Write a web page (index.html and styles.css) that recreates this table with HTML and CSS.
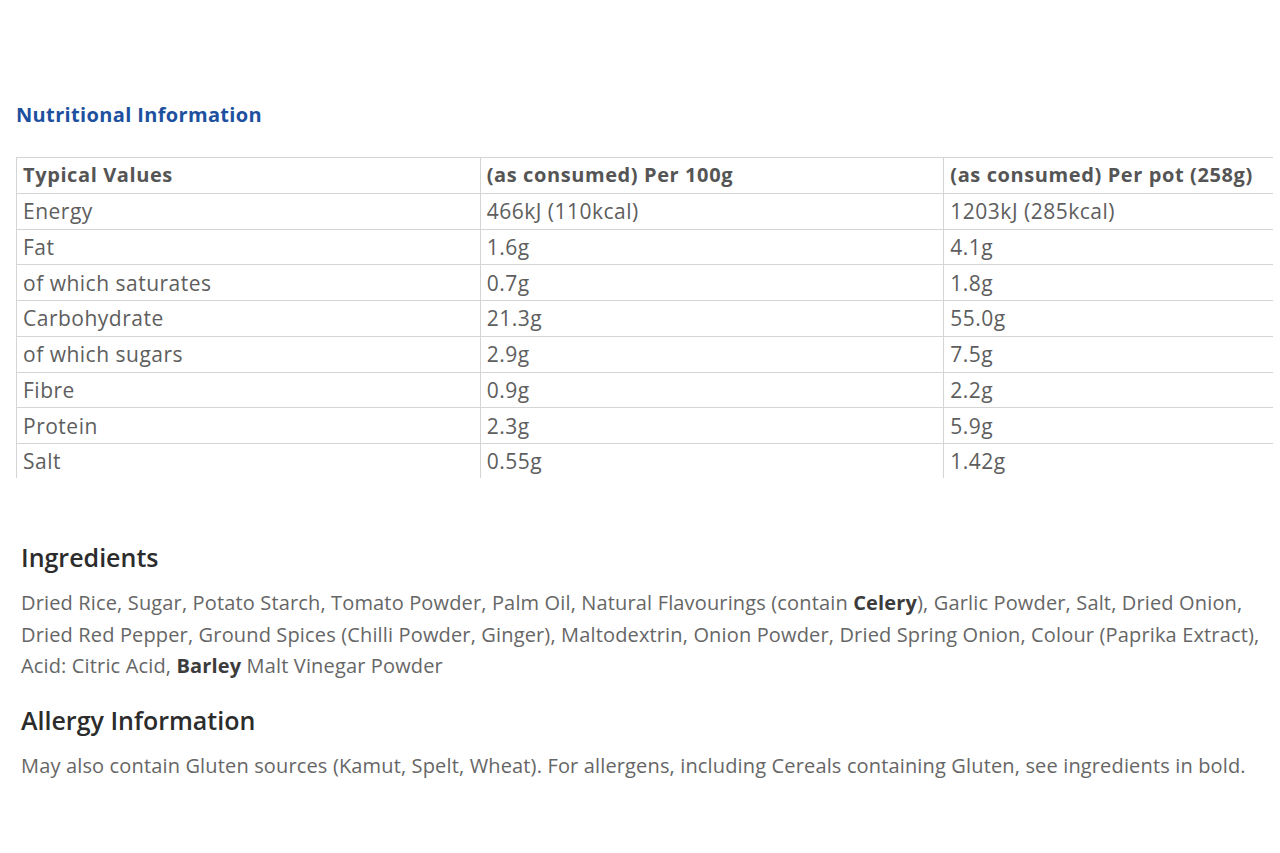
FILE: index.html
```html
<!DOCTYPE html>
<html lang="en">
<head>
<meta charset="utf-8">
<title>Nutritional Information</title>
<link rel="stylesheet" href="styles.css">
</head>
<body>
<main class="page">
  <h2 class="nutri-title">Nutritional Information</h2>
  <div class="table-wrap">
    <table class="nutri-table">
      <colgroup><col class="c1"><col class="c2"><col class="c3"></colgroup>
      <thead>
        <tr><th>Typical Values</th><th>(as consumed) Per 100g</th><th>(as consumed) Per pot (258g)</th></tr>
      </thead>
      <tbody>
        <tr><td>Energy</td><td>466kJ (110kcal)</td><td>1203kJ (285kcal)</td></tr>
        <tr><td>Fat</td><td>1.6g</td><td>4.1g</td></tr>
        <tr><td>of which saturates</td><td>0.7g</td><td>1.8g</td></tr>
        <tr><td>Carbohydrate</td><td>21.3g</td><td>55.0g</td></tr>
        <tr><td>of which sugars</td><td>2.9g</td><td>7.5g</td></tr>
        <tr><td>Fibre</td><td>0.9g</td><td>2.2g</td></tr>
        <tr><td>Protein</td><td>2.3g</td><td>5.9g</td></tr>
        <tr><td>Salt</td><td>0.55g</td><td>1.42g</td></tr>
      </tbody>
    </table>
  </div>
  <section class="info">
    <h3 class="info-title">Ingredients</h3>
    <p class="info-text">Dried Rice, Sugar, Potato Starch, Tomato Powder, Palm Oil, Natural Flavourings (contain <b>Celery</b>), Garlic Powder, Salt, Dried Onion, Dried Red Pepper, Ground Spices (Chilli Powder, Ginger), Maltodextrin, Onion Powder, Dried Spring Onion, Colour (Paprika Extract), Acid: Citric Acid, <b>Barley</b> Malt Vinegar Powder</p>
    <h3 class="info-title">Allergy Information</h3>
    <p class="info-text">May also contain Gluten sources (Kamut, Spelt, Wheat). For allergens, including Cereals containing Gluten, see ingredients in bold.</p>
  </section>
</main>
</body>
</html>
```

FILE: styles.css
```css
html, body {
  margin: 0;
  padding: 0;
  background: #ffffff;
}
body {
  font-family: "Open Sans", "Liberation Sans", sans-serif;
  color: #5a5a5a;
}
.page {
  padding: 102px 0 0 16px;
}
.nutri-title {
  margin: 0;
  font-size: 20px;
  line-height: 26px;
  font-weight: 700;
  letter-spacing: 0.35px;
  color: #1d51a0;
}
.table-wrap {
  margin-top: 29px;
  width: 1257px;
  height: 321px;
  overflow: hidden;
}
.nutri-table {
  border-collapse: collapse;
  table-layout: fixed;
  width: 1392px;
}
.nutri-table .c1, .nutri-table .c2, .nutri-table .c3 {
  width: 463px;
}
.nutri-table th, .nutri-table td {
  border: 1px solid #d4d4d4;
  height: 34.75px;
  padding: 0 6px;
  text-align: left;
  font-size: 21px;
  line-height: 24px;
  letter-spacing: 0.5px;
  color: #5e5e5e;
  white-space: nowrap;
}
.nutri-table th {
  font-size: 20px;
  font-weight: 700;
  letter-spacing: 0.6px;
  color: #555555;
}
.info {
  padding: 64px 0 0 5px;
}
.info-title {
  margin: 0;
  font-size: 25px;
  line-height: 30px;
  font-weight: 600;
  color: #2c2c2c;
}
.info-text {
  margin: 15px 0 23px;
  font-size: 20px;
  line-height: 31.5px;
  letter-spacing: 0.15px;
  color: #666666;
  max-width: 1250px;
}
.info-text b {
  font-weight: 700;
  color: #3c3c3c;
}
```
